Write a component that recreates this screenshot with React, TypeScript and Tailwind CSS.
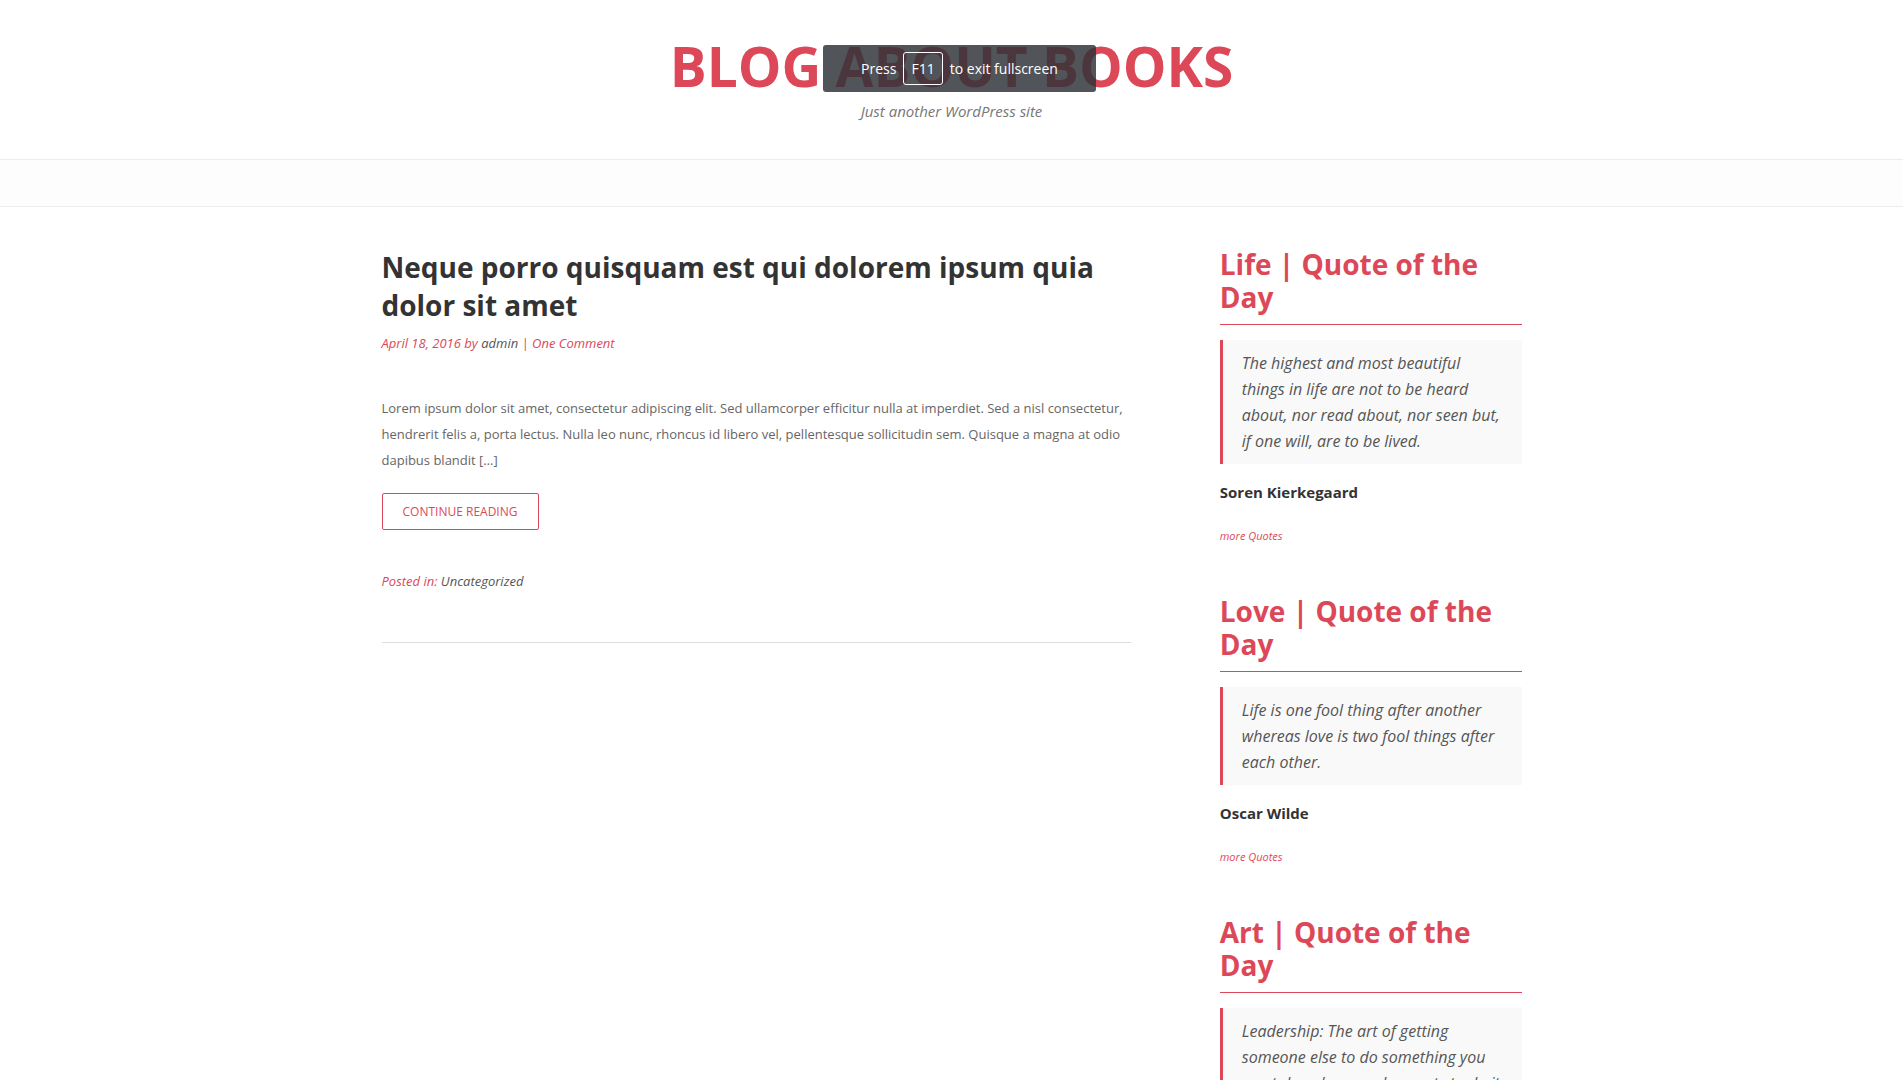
import React from "react";

interface IQuote {
  topic: string;
  text: string;
  author: string;
}

const quotes: IQuote[] = [
  {
    topic: "Life",
    text: "The highest and most beautiful things in life are not to be heard about, nor read about, nor seen but, if one will, are to be lived.",
    author: "Soren Kierkegaard",
  },
  {
    topic: "Love",
    text: "Life is one fool thing after another whereas love is two fool things after each other.",
    author: "Oscar Wilde",
  },
  {
    topic: "Art",
    text: "Leadership: The art of getting someone else to do something you want done because he wants to do it.",
    author: "Dwight D. Eisenhower",
  },
];

function QuoteWidget({ quote, first }: { quote: IQuote; first?: boolean }) {
  return (
    <section className={first ? "" : "mt-[50px]"}>
      <h2 className="text-[28px] leading-[33px] font-bold text-[#dd4858] pb-[10px] border-b border-[#dd4858]">
        {quote.topic} | Quote of the Day
      </h2>
      <blockquote className="mt-[15px] bg-[#f9f9f9] border-l-[3px] border-[#dd4858] py-[10px] pl-[19px] pr-[16px] text-[16px] leading-[26px] italic text-[#555]">
        {quote.text}
      </blockquote>
      <p className="mt-[17px] text-[15px] leading-[22px] font-bold text-[#333]">{quote.author}</p>
      <a href="#" className="block mt-[24px] text-[11px] leading-[18px] italic text-[#dd4858]">
        more Quotes
      </a>
    </section>
  );
}

export default function App() {
  return (
    <div className="relative min-h-screen bg-white font-['Open_Sans','Liberation_Sans',sans-serif]">
      {/* header */}
      <header className="pt-[36px] pb-[37px] text-center border-b border-[#ececec]">
        <h1 className="text-[55px] leading-[60px] font-bold text-[#dd4858]">BLOG ABOUT BOOKS</h1>
        <p className="mt-[5px] text-[15px] leading-[21px] italic text-[#777]">Just another WordPress site</p>
      </header>
      <nav className="h-[47px] bg-[#fdfdfd] border-b border-[#ececec]"></nav>

      <main className="w-[1170px] mx-auto px-[15px] pt-[41px] flex items-start">
        <article className="w-[750px]">
          <h2 className="text-[28px] leading-[38px] font-bold text-[#333]">
            Neque porro quisquam est qui dolorem ipsum quia dolor sit amet
          </h2>
          <div className="mt-[9px] text-[13px] leading-[20px] italic text-[#dd4858]">
            April 18, 2016 by <span className="text-[#555]">admin</span> | One Comment
          </div>
          <p className="mt-[42px] text-[13px] leading-[26px] text-[#666]">
            Lorem ipsum dolor sit amet, consectetur adipiscing elit. Sed ullamcorper efficitur nulla at imperdiet. Sed a nisl consectetur,
            hendrerit felis a, porta lectus. Nulla leo nunc, rhoncus id libero vel, pellentesque sollicitudin sem. Quisque a magna at odio
            dapibus blandit […]
          </p>
          <button className="mt-[20px] h-[37px] w-[157px] border border-[#dd4858] rounded-[2px] text-[12px] text-[#dd4858] uppercase">
            Continue Reading
          </button>
          <div className="mt-[41px] text-[13px] leading-[20px] italic">
            <span className="text-[#dd4858]">Posted in:</span> <span className="text-[#555]">Uncategorized</span>
          </div>
          <hr className="mt-[51px] border-t border-[#ddd]" />
        </article>

        <aside className="ml-[89px] w-[302px]">
          {quotes.map((q, i) => (
            <QuoteWidget key={q.topic} quote={q} first={i === 0} />
          ))}
        </aside>
      </main>

      {/* browser fullscreen notice */}
      <div className="absolute left-[823px] top-[45px] w-[273px] h-[47px] rounded-[3px] bg-[rgba(48,51,56,0.84)] flex items-center justify-center gap-[7px] text-white text-[14px] font-['Open_Sans',sans-serif]">
        <span>Press</span>
        <span className="h-[33px] px-[7px] flex items-center border border-white rounded-[3px]">F11</span>
        <span>to exit fullscreen</span>
      </div>
    </div>
  );
}
